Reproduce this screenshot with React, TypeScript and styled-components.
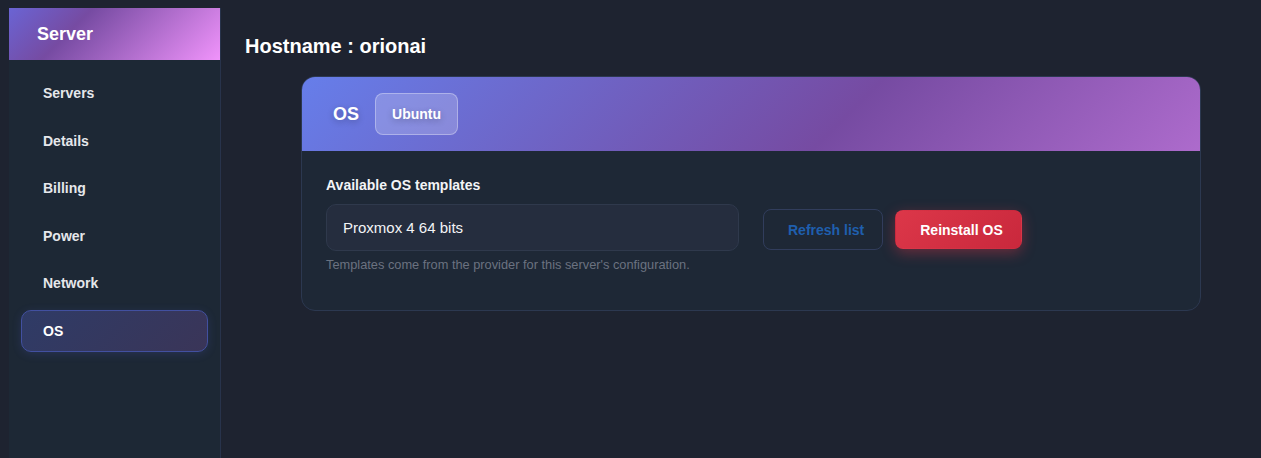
import React from 'react';
import styled, {createGlobalStyle} from 'styled-components';

const GlobalStyle = createGlobalStyle`
    * {
        box-sizing: border-box;
    }

    body {
        margin: 0;
        background: #1e2330;
        font-family: "Liberation Sans", Arial, sans-serif;
        color: #f3f4f6;
    }
`;

const Layout = styled.div`
    display: flex;
    height: 100vh;
    padding: 8px 0 0 8px;
    overflow: hidden;
`;

const Sidebar = styled.aside`
    width: 212px;
    flex-shrink: 0;
    display: flex;
    flex-direction: column;
    background: #1d2835;
    border-right: 1px solid #28334b;
    margin-left: 1px;
`;

const SidebarHeader = styled.div`
    height: 52px;
    display: flex;
    align-items: center;
    padding-left: 28px;
    font-size: 18px;
    font-weight: bold;
    color: #ffffff;
    background: linear-gradient(135deg, #6a64d4 0%, #764ba2 32%, #f093fb 100%);
`;

const Nav = styled.nav`
    display: flex;
    flex-direction: column;
    gap: 5.5px;
    padding: 12px 12px;
`;

const NavItem = styled.div<{ $active?: boolean }>`
    height: 42px;
    display: flex;
    align-items: center;
    padding-left: 21px;
    border-radius: 10px;
    font-size: 14px;
    font-weight: bold;
    color: ${props => props.$active ? '#ffffff' : '#e5e7eb'};
    border: 1px solid ${props => props.$active ? '#4250a0' : 'transparent'};
    background: ${props => props.$active
            ? 'linear-gradient(135deg, #2f3b66 0%, #3a3558 100%)'
            : 'transparent'};
    box-shadow: ${props => props.$active ? '0 2px 10px rgba(90, 100, 220, 0.18)' : 'none'};
`;

const Main = styled.main`
    flex: 1;
    padding: 24px;
`;

const Title = styled.h1`
    margin: 0 0 16px 0;
    font-size: 20px;
    line-height: 28px;
    font-weight: bold;
    color: #ffffff;
`;

const Card = styled.section`
    width: 900px;
    margin-left: 56px;
    border-radius: 14px;
    overflow: hidden;
    background: #1e2836;
    border: 1px solid #2c3850;
`;

const CardHeader = styled.div`
    height: 74px;
    display: flex;
    align-items: center;
    gap: 16px;
    padding: 0 31px;
    background: linear-gradient(135deg, #667eea 0%, #764ba2 60%, #ad6bcc 100%);
`;

const HeaderTitle = styled.span`
    font-size: 18px;
    font-weight: bold;
    color: #ffffff;
    text-shadow: 0 2px 6px rgba(0, 0, 0, 0.25);
`;

const Badge = styled.span`
    height: 42px;
    display: flex;
    align-items: center;
    padding: 0 16px;
    border-radius: 8px;
    font-size: 14px;
    font-weight: bold;
    color: #ffffff;
    background: rgba(255, 255, 255, 0.2);
    border: 1px solid rgba(255, 255, 255, 0.32);
    text-shadow: 0 2px 6px rgba(0, 0, 0, 0.25);
`;

const CardBody = styled.div`
    padding: 26px 24px 37px 24px;
`;

const Label = styled.div`
    font-size: 14px;
    line-height: 17px;
    font-weight: bold;
    color: #f3f4f6;
    margin-bottom: 10px;
`;

const Row = styled.div`
    display: flex;
    align-items: flex-start;
    gap: 24px;
`;

const Field = styled.div`
    display: flex;
    flex-direction: column;
    gap: 6px;
`;

const Select = styled.div`
    width: 413px;
    height: 47px;
    display: flex;
    align-items: center;
    padding-left: 16px;
    border-radius: 10px;
    background: #252d3e;
    border: 1px solid #2f394c;
    font-size: 15px;
    color: #f3f4f6;
`;

const Help = styled.div`
    font-size: 12.8px;
    line-height: 16px;
    color: #6b7280;
`;

const Actions = styled.div`
    display: flex;
    align-items: center;
    gap: 12px;
    margin-top: 5px;
`;

const Button = styled.button<{ $danger?: boolean }>`
    height: ${props => props.$danger ? '39px' : '41px'};
    padding: 0 18px 0 24px;
    border-radius: 8px;
    font-family: inherit;
    font-size: 14px;
    font-weight: bold;
    cursor: pointer;
    color: ${props => props.$danger ? '#ffffff' : '#1f5fae'};
    border: 1px solid ${props => props.$danger ? 'transparent' : '#313d5c'};
    background: ${props => props.$danger
            ? 'linear-gradient(135deg, #dc3749 0%, #c9283c 100%)'
            : 'transparent'};
    box-shadow: ${props => props.$danger ? '0 4px 14px rgba(220, 53, 69, 0.4)' : 'none'};
`;

const navItems = ['Servers', 'Details', 'Billing', 'Power', 'Network', 'OS'];

const App: React.FC = () => {
    return (
        <>
            <GlobalStyle/>
            <Layout>
                <Sidebar>
                    <SidebarHeader>Server</SidebarHeader>
                    <Nav>
                        {navItems.map(item => (
                            <NavItem key={item} $active={item === 'OS'}>{item}</NavItem>
                        ))}
                    </Nav>
                </Sidebar>
                <Main>
                    <Title>Hostname : orionai</Title>
                    <Card>
                        <CardHeader>
                            <HeaderTitle>OS</HeaderTitle>
                            <Badge>Ubuntu</Badge>
                        </CardHeader>
                        <CardBody>
                            <Label>Available OS templates</Label>
                            <Row>
                                <Field>
                                    <Select>Proxmox 4 64 bits</Select>
                                    <Help>Templates come from the provider for this server's configuration.</Help>
                                </Field>
                                <Actions>
                                    <Button>Refresh list</Button>
                                    <Button $danger>Reinstall OS</Button>
                                </Actions>
                            </Row>
                        </CardBody>
                    </Card>
                </Main>
            </Layout>
        </>
    );
}

export default App;
